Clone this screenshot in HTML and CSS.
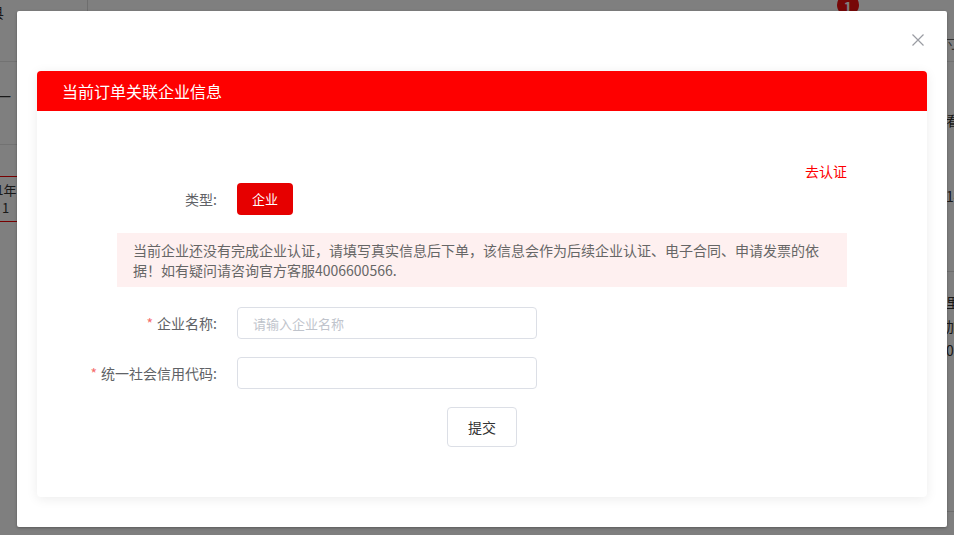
FILE: index.html
```html
<!DOCTYPE html>
<html lang="zh-CN">
<head>
<meta charset="utf-8">
<title>当前订单关联企业信息</title>
<link rel="stylesheet" href="styles.css">
</head>
<body>
<div class="page">
  <div class="topbar">
    <div class="tb-left"><span class="tb-char">县</span></div>
    <div class="tb-mid"></div>
    <div class="tb-right">
      <span class="badge">1</span>
      <span class="tb-char2">寸</span>
    </div>
  </div>
  <div class="main">
    <div class="col-left">
      <div class="l-row1">一</div>
      <div class="l-row2">
        <div class="l-box"><div>21年</div><div>：1</div></div>
      </div>
    </div>
    <div class="col-mid"></div>
    <div class="col-right">
      <div class="r-row1">看</div>
      <div class="r-row2">14</div>
      <div class="r-row3"><div>里</div><div>加</div><div>02</div></div>
    </div>
  </div>
</div>
<div class="mask"></div>
<div class="dialog">
  <button class="close" aria-label="关闭">
    <svg width="12" height="12" viewBox="0 0 12 12"><path d="M0.5 0.5 L11.5 11.5 M11.5 0.5 L0.5 11.5" stroke="#9a9ca3" stroke-width="1.2" fill="none"/></svg>
  </button>
  <div class="card">
    <div class="card-head">当前订单关联企业信息</div>
    <div class="card-body">
      <div class="auth-line"><a class="auth-link">去认证</a></div>
      <div class="form-row type-row">
        <div class="label">类型:</div>
        <span class="type-btn">企业</span>
      </div>
      <div class="notice">当前企业还没有完成企业认证，请填写真实信息后下单，该信息会作为后续企业认证、电子合同、申请发票的依据！如有疑问请咨询官方客服4006600566.</div>
      <div class="form-row field-row first">
        <div class="label"><span class="req">*</span>企业名称:</div>
        <input class="input" type="text" placeholder="请输入企业名称">
      </div>
      <div class="form-row field-row">
        <div class="label"><span class="req">*</span>统一社会信用代码:</div>
        <input class="input" type="text">
      </div>
      <div class="submit-line"><button class="submit">提交</button></div>
    </div>
  </div>
</div>
</body>
</html>
```
FILE: styles.css
```css
* { box-sizing: border-box; }
html, body { margin: 0; padding: 0; }
body {
  width: 954px;
  height: 535px;
  overflow: hidden;
  position: relative;
  font-family: "Noto Sans CJK SC", "Noto Sans", "Liberation Sans", sans-serif;
  background: #fff;
  color: #333;
}

/* background page */
.page { width: 954px; height: 535px; }
.topbar {
  height: 62px;
  display: flex;
  border-bottom: 1px solid #e4e4e4;
}
.tb-left {
  width: 88px;
  border-right: 1px solid #ddd;
  position: relative;
  overflow: hidden;
}
.tb-char { display: block; margin-left: -10px; margin-top: 2px; font-size: 14px; }
.tb-mid { flex: 1; }
.tb-right {
  width: 120px;
  display: flex;
  justify-content: flex-end;
  position: relative;
}
.badge {
  position: absolute;
  left: 3px;
  top: -6px;
  width: 22px;
  height: 22px;
  border-radius: 50%;
  background: #ee1111;
  color: #fff;
  font-size: 14px;
  font-weight: 700;
  text-align: center;
  line-height: 26px;
}
.tb-char2 { margin-top: 32px; margin-right: -6px; font-size: 14px; color: #666; }

.main { display: flex; height: 472px; }
.col-left { width: 60px; margin-left: -43px; }
.l-row1 { height: 83px; border-bottom: 1px solid #e4e4e4; padding-top: 24px; padding-left: 40px; font-size: 14px; }
.l-row2 { padding-top: 31px; }
.l-box {
  border-top: 1px solid #e00;
  border-bottom: 1px solid #e00;
  height: 46px;
  padding-top: 4px;
  font-size: 13px;
  line-height: 18px;
  padding-left: 32px;
  white-space: nowrap;
}
.col-mid { flex: 1; }
.col-right { width: 30px; margin-right: -22px; font-size: 14px; }
.r-row1 { padding-top: 48px; height: 124px; }
.r-row2 { height: 86px; border-bottom: 1px solid #ddd; }
.r-row3 { padding-top: 18px; line-height: 24px; height: 240px; border-bottom: 1px solid #ddd; }

.mask {
  position: absolute;
  inset: 0;
  background: rgba(0, 0, 0, 0.5);
}

/* dialog */
.dialog {
  position: absolute;
  left: 17px;
  top: 11px;
  width: 930px;
  height: 516px;
  background: #fff;
  border-radius: 2px;
  box-shadow: 0 1px 3px rgba(0, 0, 0, 0.3);
  padding: 60px 20px 0;
}
.close {
  position: absolute;
  right: 23px;
  top: 23px;
  width: 12px;
  height: 12px;
  padding: 0;
  border: 0;
  background: none;
  display: flex;
}
.card {
  border-radius: 4px;
  overflow: hidden;
  background: #fff;
  box-shadow: 0 2px 12px rgba(0, 0, 0, 0.08);
}
.card-head {
  height: 40px;
  line-height: 40px;
  background: #fe0000;
  color: #fff;
  font-size: 16px;
  font-weight: 400;
  padding-left: 25px;
}
.card-body { padding: 49px 80px 50px; }
.auth-line { text-align: right; height: 20px; line-height: 20px; }
.auth-link { color: #fe0000; font-size: 14px; cursor: pointer; }

.form-row { display: flex; align-items: center; }
.label {
  width: 120px;
  flex-shrink: 0;
  display: flex;
  justify-content: flex-end;
  padding-right: 20px;
  white-space: nowrap;
  font-size: 14px;
  color: #606266;
}
.req { color: #f56c6c; margin-right: 4px; }
.type-row { margin-top: 3px; height: 32px; }
.type-btn {
  width: 56px;
  height: 32px;
  line-height: 32px;
  text-align: center;
  border-radius: 4px;
  background: #e60000;
  color: #fff;
  font-size: 13px;
}
.notice {
  margin-top: 18px;
  background: #fef0f0;
  padding: 7px 16px;
  font-size: 14px;
  line-height: 20px;
  color: #666;
}
.field-row { margin-top: 18px; height: 32px; }
.field-row.first { margin-top: 20px; }
.input {
  width: 300px;
  height: 32px;
  border: 1px solid #dcdfe6;
  border-radius: 4px;
  padding: 0 15px;
  font-size: 13px;
  font-family: inherit;
  color: #606266;
  outline: none;
}
.input::placeholder { color: #c0c4cc; }
.submit-line { margin-top: 18px; display: flex; justify-content: center; }
.submit {
  width: 70px;
  height: 40px;
  border: 1px solid #dcdfe6;
  border-radius: 4px;
  background: #fff;
  font-family: inherit;
  font-size: 14px;
  color: #333;
  padding: 0;
}
```
